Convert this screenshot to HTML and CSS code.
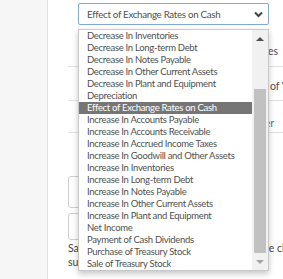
FILE: index.html
```html
<!DOCTYPE html>
<html lang="en">
<head>
  <meta charset="UTF-8" />
  <title>Cash Flow Item</title>
  <link rel="stylesheet" href="styles.css">
</head>
<body>
  <div class="page">
    <aside class="side"></aside>

    <main class="main">
      <div class="select">
        <span class="select-value">Effect of Exchange Rates on Cash</span>
        <svg class="chev" width="9" height="7" viewBox="0 0 9 7">
          <polyline points="1,1.5 4.5,5 8,1.5" fill="none" stroke="#444" stroke-width="2"/>
        </svg>
      </div>

      <div class="rows">
        <div class="row row-a"><span>Decrease In Receivables</span></div>
        <div class="row row-b"><span class="lbl">Cash and Cash Equivalents, Beginning</span><span>of Year</span></div>
        <div class="row row-c"><a class="link">Add Another</a></div>
      </div>

      <div class="field tall"></div>
      <div class="field"></div>
      <p class="note"><span class="line">Save selected items to see the updated value change in the</span><br>summary below.</p>

      <!-- open dropdown list -->
      <div class="dropdown">
        <ul class="options">
          <li>Decrease In Inventories</li>
          <li>Decrease In Long-term Debt</li>
          <li>Decrease In Notes Payable</li>
          <li>Decrease In Other Current Assets</li>
          <li>Decrease In Plant and Equipment</li>
          <li>Depreciation</li>
          <li class="active">Effect of Exchange Rates on Cash</li>
          <li>Increase In Accounts Payable</li>
          <li>Increase In Accounts Receivable</li>
          <li>Increase In Accrued Income Taxes</li>
          <li>Increase In Goodwill and Other Assets</li>
          <li>Increase In Inventories</li>
          <li>Increase In Long-term Debt</li>
          <li>Increase In Notes Payable</li>
          <li>Increase In Other Current Assets</li>
          <li>Increase In Plant and Equipment</li>
          <li>Net Income</li>
          <li>Payment of Cash Dividends</li>
          <li>Purchase of Treasury Stock</li>
          <li>Sale of Treasury Stock</li>
        </ul>
        <div class="scrollbar">
          <div class="sb-btn"><span class="arrow-up"></span></div>
          <div class="sb-track"><div class="sb-thumb"></div></div>
          <div class="sb-btn"><span class="arrow-down"></span></div>
        </div>
      </div>
    </main>
  </div>
</body>
</html>
```

FILE: styles.css
```css
* { box-sizing: border-box; }
html, body { margin: 0; overflow: hidden; }
body {
  background: #fff; color: #505050;
  font-family: Lato, "Open Sans", sans-serif; font-size: 10px;
}
.page {
  display: flex; width: 283px; height: 279px; overflow: hidden;
}
.side {
  width: 48px; flex: none; background: #f6f6f6;
  border-right: 1px solid #e2e2e2;
}
.main {
  position: relative; flex: none; width: 260px;
  padding: 3px 0 0 20px;
}

/* select */
.select {
  display: flex; align-items: center; justify-content: space-between;
  width: 191px; height: 22px; margin-left: 10px;
  padding: 0 5px 0 8px; border: 1px solid #80a9d8; border-radius: 2px;
  font-size: 9.75px; letter-spacing: -0.3px; color: #505050;
}
.chev { display: block; }

/* rows behind the list */
.rows { width: 215px; margin-top: 7px; }
.row {
  display: flex; align-items: flex-end; justify-content: flex-end;
  border-bottom: 1px solid #e2e2e2; line-height: 12px; white-space: nowrap;
  font-size: 10.5px;
}
.row-a { height: 35px; padding: 0 5px 9px 0; }
.row-b { height: 34px; padding: 0 0 8px 14px; justify-content: flex-start; }
.row-b .lbl { width: 188px; flex: none; overflow: hidden; }
.row-c { height: 32px; padding: 0 9px 3px 0; }
.link { color: #3a7bc0; }

.field {
  width: 194px; height: 32px; margin-top: 43px;
  border: 1px solid #cfcfcf; border-radius: 3px;
}
.field.tall + .field { height: 27px; margin-top: 5px; }
.note {
  margin: 1px 0 0; font-size: 10.5px; line-height: 14px;
  color: #454545;
}
.note .line { white-space: nowrap; }

/* dropdown */
.dropdown {
  position: absolute; left: 30px; top: 29px;
  display: flex; width: 191px; height: 242px;
  background: #fff; border: 1px solid #c8c8c8;
  box-shadow: 0 3px 6px rgba(0,0,0,.22);
}
.options {
  flex: 1; margin: 0; padding: 0; list-style: none;
}
.options li {
  height: 12px; line-height: 12px; padding-left: 8px; white-space: nowrap;
  font-size: 9.5px; letter-spacing: -0.3px; color: #505050;
}
.options li.active { background: #767676; color: #fff; }
.scrollbar {
  width: 16px; flex: none; display: flex; flex-direction: column;
  background: #f1f1f1;
}
.sb-btn {
  height: 17px; display: flex; align-items: center; justify-content: center;
}
.sb-track {
  flex: 1; display: flex; flex-direction: column; justify-content: flex-end;
  padding: 0 2px;
}
.sb-thumb { height: 164px; background: #c1c1c1; }
.arrow-up, .arrow-down {
  width: 0; height: 0;
  border-left: 4px solid transparent; border-right: 4px solid transparent;
}
.arrow-up { border-bottom: 4px solid #505050; }
.arrow-down { border-top: 4px solid #a3a3a3; }
```
